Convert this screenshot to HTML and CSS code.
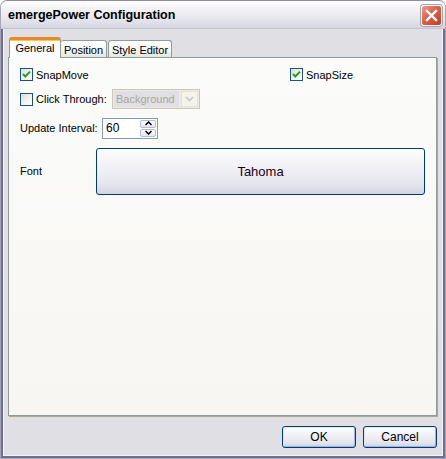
FILE: index.html
```html
<!DOCTYPE html>
<html>
<head>
<meta charset="utf-8">
<link rel="stylesheet" href="styles.css">
</head>
<body>
<div class="window">
  <div class="titlebar">
    <span class="title">emergePower Configuration</span>
    <span class="close">
      <svg width="13" height="13" viewBox="0 0 13 13"><path d="M2 2 L11 11 M11 2 L2 11" stroke="#fff" stroke-width="2.4" stroke-linecap="square"/></svg>
    </span>
  </div>
  <div class="client">
    <div class="tabs">
      <div class="tab tab-active tab-general">General</div>
      <div class="tab tab-position">Position</div>
      <div class="tab tab-style">Style Editor</div>
    </div>
    <div class="panel">
      <div class="row row1">
        <label class="check check-snapmove"><span class="box"><svg width="11" height="11" viewBox="0 0 11 11"><path d="M2 5 L4.3 7.5 L9 2.6" fill="none" stroke="#21a121" stroke-width="2"/></svg></span>SnapMove</label>
        <label class="check"><span class="box"><svg width="11" height="11" viewBox="0 0 11 11"><path d="M2 5 L4.3 7.5 L9 2.6" fill="none" stroke="#21a121" stroke-width="2"/></svg></span>SnapSize</label>
      </div>
      <div class="row row2">
        <label class="check check-click"><span class="box"></span>Click Through:</label>
        <div class="combo">
          <span class="combo-text">Background</span>
          <span class="combo-btn"><svg width="9" height="6" viewBox="0 0 9 6"><path d="M1 1 L4.5 4.5 L8 1" fill="none" stroke="#c9c7ba" stroke-width="1.6"/></svg></span>
        </div>
      </div>
      <div class="row row3">
        <span class="lbl-interval">Update Interval:</span>
        <div class="spin">
          <span class="spin-text">60</span>
          <span class="spin-btns">
            <span class="spin-btn"><svg width="7" height="5" viewBox="0 0 7 5"><path d="M0.5 4 L3.5 1 L6.5 4" fill="none" stroke="#000" stroke-width="1.5"/></svg></span>
            <span class="spin-btn"><svg width="7" height="5" viewBox="0 0 7 5"><path d="M0.5 1 L3.5 4 L6.5 1" fill="none" stroke="#000" stroke-width="1.5"/></svg></span>
          </span>
        </div>
      </div>
      <div class="row row4">
        <span class="lbl-font">Font</span>
        <div class="btn font-btn">Tahoma</div>
      </div>
    </div>
    <div class="footer">
      <div class="btn dlg-btn default">OK</div>
      <div class="btn dlg-btn">Cancel</div>
    </div>
  </div>
</div>
</body>
</html>
```

FILE: styles.css
```css
html, body {
  margin: 0;
  padding: 0;
  background: #ffffff;
}
body {
  font-family: "Liberation Sans", Arial, sans-serif;
  font-size: 11px;
  color: #000;
}
.window {
  width: 446px;
  height: 459px;
  box-sizing: border-box;
  display: flex;
  flex-direction: column;
  background: #e0dfe3;
  border-radius: 7px 7px 0 0;
  overflow: hidden;
  border: 1px solid #a7a6b8;
  border-top-color: #8c8ca4;
}
.titlebar {
  height: 27px;
  flex: none;
  display: flex;
  align-items: center;
  padding-left: 7px;
  padding-right: 3px;
  background: linear-gradient(to bottom, #ffffff 0%, #f2f2f6 30%, #e4e4ec 70%, #d6d6e0 100%);
  border-bottom: 1px solid #c4c4d2;
}
.title {
  flex: 1;
  font-size: 12.5px;
  font-weight: bold;
  color: #000;
  padding-top: 1px;
}
.close {
  width: 19px;
  height: 19px;
  border: 1px solid #ffffff;
  border-radius: 3px;
  background: linear-gradient(135deg, #ef9a88 0%, #dd604a 45%, #c23a28 100%);
  box-shadow: 0 0 0 1px #b0a0a8;
  display: flex;
  align-items: center;
  justify-content: center;
  margin-top: 2px;
}
.client {
  flex: 1;
  display: flex;
  flex-direction: column;
  border-left: 2px solid #6f6e90;
  border-right: 2px solid #6f6e90;
  border-bottom: 2px solid #6f6e90;
  box-shadow: inset 1px 0 #f4f4f6, inset -1px 0 #f4f4f6, inset 0 -1px #f4f4f6;
  padding: 8px 6px 8px 5px;
}
.tabs {
  display: flex;
  align-items: flex-end;
  height: 20px;
  padding-left: 1px;
  position: relative;
  z-index: 2;
}
.tab {
  box-sizing: border-box;
  height: 17px;
  border: 1px solid #919b9c;
  border-bottom: none;
  border-radius: 3px 3px 0 0;
  background: linear-gradient(to bottom, #ffffff 0%, #f4f4f0 60%, #e6e5df 100%);
  display: flex;
  align-items: center;
  justify-content: center;
  padding-top: 1px;
}
.tab-active {
  height: 21px;
  margin-bottom: -1px;
  background: #fcfcfe;
  border-top: 3px solid #e68b2c;
  box-shadow: inset 0 1px #ffc73c;
  padding-top: 0;
  padding-bottom: 2px;
}
.tab-general { width: 52px; }
.tab-position { width: 46px; border-left: none; }
.tab-style { width: 64px; margin-left: 1px; }
.panel {
  flex: 1;
  box-sizing: border-box;
  border: 1px solid #919b9c;
  background: linear-gradient(to bottom, #fbfbf9 0%, #f7f6f3 100%);
  box-shadow: 1px 1px 0 #aca899;
  padding: 8px 8px 0 11px;
}
.row {
  display: flex;
  align-items: center;
}
.row1 { height: 17px; }
.row2 { height: 22px; margin-top: 5px; }
.row3 { height: 22px; margin-top: 7px; }
.row4 { height: 47px; margin-top: 9px; }
.check {
  display: flex;
  align-items: center;
}
.check-snapmove { width: 270px; }
.check-click { width: 92px; }
.box {
  box-sizing: border-box;
  width: 13px;
  height: 13px;
  border: 1px solid #1c5180;
  background: linear-gradient(135deg, #dcdcd7 0%, #f4f4f0 60%, #ffffff 100%);
  margin-right: 3px;
  display: flex;
  align-items: center;
  justify-content: center;
}
.combo {
  box-sizing: border-box;
  width: 88px;
  height: 20px;
  border: 1px solid #c9c7ba;
  background: #ebebe4;
  display: flex;
  align-items: stretch;
  padding: 1px;
}
.combo-text {
  flex: 1;
  background: #e0dfe3;
  color: #aca899;
  font-size: 11px;
  display: flex;
  align-items: center;
  padding-left: 2px;
}
.combo-btn {
  width: 15px;
  margin-left: 2px;
  background: #f4f3ee;
  border: 1px solid #e4e2d8;
  display: flex;
  align-items: center;
  justify-content: center;
}
.lbl-interval {
  width: 82px;
}
.spin {
  box-sizing: border-box;
  width: 56px;
  height: 21px;
  border: 1px solid #7f9db9;
  background: #fff;
  display: flex;
  align-items: center;
  padding: 1px 1px 1px 3px;
}
.spin-text {
  flex: 1;
  font-size: 12px;
}
.spin-btns {
  display: flex;
  flex-direction: column;
  gap: 1px;
  height: 17px;
  width: 16px;
}
.spin-btn {
  flex: 1;
  box-sizing: border-box;
  border: 1px solid #b6bccc;
  border-radius: 2px;
  background: linear-gradient(to bottom, #ffffff 0%, #e4e6ee 100%);
  display: flex;
  align-items: center;
  justify-content: center;
}
.lbl-font {
  width: 76px;
  padding-bottom: 1px;
}
.btn {
  box-sizing: border-box;
  border: 1px solid #003c74;
  border-radius: 3px;
  background: linear-gradient(to bottom, #ffffff 0%, #f4f4f8 30%, #e6e6ee 75%, #d4d4e0 100%);
  display: flex;
  align-items: center;
  justify-content: center;
  color: #000;
}
.font-btn {
  width: 329px;
  height: 47px;
  font-size: 13px;
  color: #1c0014;
}
.footer {
  display: flex;
  justify-content: flex-end;
  gap: 7px;
  margin-top: 10px;
  height: 22px;
  flex: none;
}
.dlg-btn {
  width: 74px;
  height: 22px;
  font-size: 12px;
  box-shadow: inset -1px -1px 0 #98b4e8, inset 1px 1px 0 #e0eafc;
}
```
